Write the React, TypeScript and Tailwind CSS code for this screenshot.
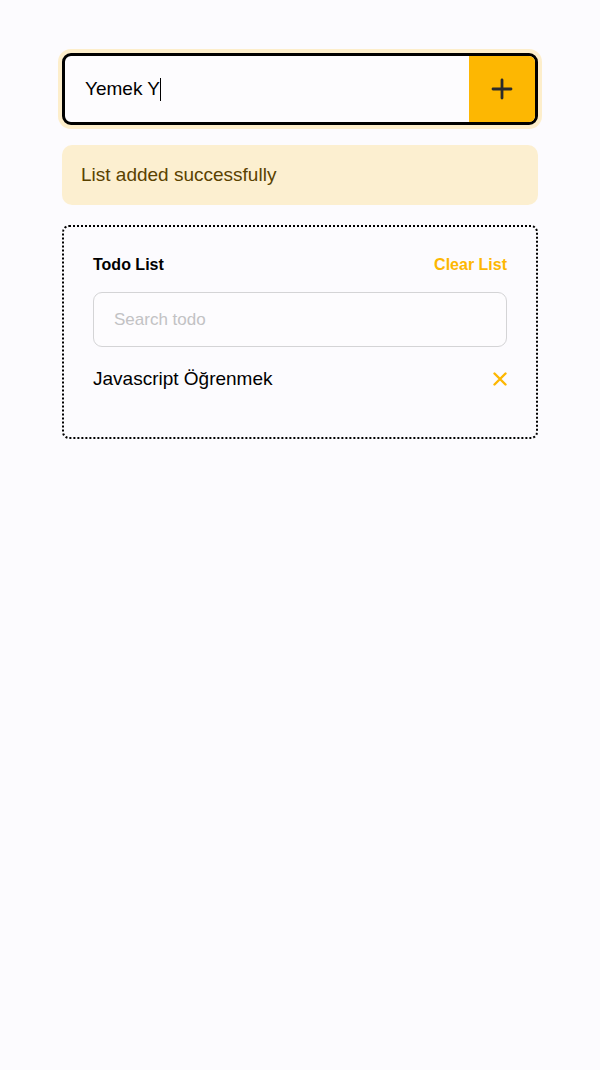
import React from "react";

export default function App() {
  return (
    <div className="min-h-[1070px] w-full bg-[#fcfbfe] font-['Liberation_Sans',Arial,sans-serif]">
      <div className="mx-auto w-[476px] pt-[53px]">
        <div className="flex h-[72px] overflow-hidden rounded-[9px] border-[3px] border-black bg-[#fdfcfe] shadow-[0_0_0_4px_#fdeecb]">
          <div className="flex flex-1 items-center pl-[20px] text-[19px] text-black">
            <span>Yemek Y</span>
            <span className="h-[23px] w-[1px] bg-black" />
          </div>
          <button className="flex w-[66px] items-center justify-center bg-[#fdb702]">
            <svg width="22" height="22" viewBox="0 0 22 22" fill="none" stroke="#2b2b2b" strokeWidth="2.8" strokeLinecap="round">
              <path d="M11 2v18M2 11h18" />
            </svg>
          </button>
        </div>

        <div className="mt-[20px] flex h-[60px] items-center rounded-[10px] bg-[#fcefd0] pl-[19px] text-[19px] text-[#5a4200]">
          List added successfully
        </div>

        <div className="mt-[20px] rounded-[7px] border-2 border-dotted border-black px-[29px] pt-[26px] pb-[43px]">
          <div className="flex items-center justify-between">
            <span className="text-[16px] font-bold text-black">Todo List</span>
            <span className="text-[16px] font-bold text-[#fdb702]">Clear List</span>
          </div>
          <div className="mt-[15px] flex h-[55px] items-center rounded-[9px] border border-[#d4d4d6] bg-[#fdfcfe] pl-[20px] text-[17px] text-[#c2c2c4]">
            Search todo
          </div>
          <div className="mt-[18px] flex items-center justify-between">
            <span className="text-[19px] text-black">Javascript Öğrenmek</span>
            <svg width="14" height="14" viewBox="0 0 14 14" fill="none" stroke="#fdb702" strokeWidth="2.4" strokeLinecap="round">
              <path d="M1.5 1.5l11 11M12.5 1.5l-11 11" />
            </svg>
          </div>
        </div>
      </div>
    </div>
  );
}
